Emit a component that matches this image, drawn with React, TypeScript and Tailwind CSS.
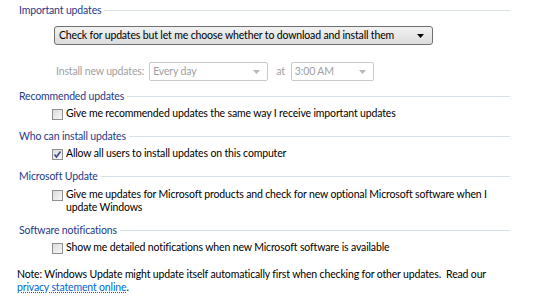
import React from 'react';

const font = { fontFamily: 'Lato, "Liberation Sans", Arial, sans-serif' };

function SectionHeader({ title }: { title: string }) {
  return (
    <div className="flex h-[16px] items-center">
      <span className="whitespace-nowrap leading-none text-[#1e3a8a]">{title}</span>
      <div className="ml-[3px] h-px flex-1 bg-[#d9e1e8]" />
    </div>
  );
}

function Checkbox({ checked }: { checked?: boolean }) {
  return (
    <span className="mt-[2px] flex h-[11px] w-[11px] shrink-0 items-center justify-center border border-[#8f8f8f] bg-gradient-to-br from-[#dcdcdc] to-[#f7f7f7]">
      {checked && (
        <svg width="9" height="9" viewBox="0 0 9 9">
          <path d="M1.5 4.5 L3.5 7 L7.5 1.5" fill="none" stroke="#3b4a8a" strokeWidth="1.6" />
        </svg>
      )}
    </span>
  );
}

function CheckRow({ checked, children }: { checked?: boolean; children: React.ReactNode }) {
  return (
    <div className="flex gap-[3px] pl-[33px]">
      <Checkbox checked={checked} />
      <span className="leading-[13px]">{children}</span>
    </div>
  );
}

function Arrow({ disabled }: { disabled?: boolean }) {
  return (
    <svg width="7" height="4" viewBox="0 0 7 4">
      <path d="M0 0 H7 L3.5 4 Z" fill={disabled ? '#b8b8b8' : '#000'} />
    </svg>
  );
}

export default function App() {
  return (
    <div
      className="h-[307px] w-[540px] overflow-hidden bg-white text-[10.5px] tracking-[-0.15px] text-black"
      style={font}
    >
      <div className="flex w-[510px] flex-col pl-[19px] pt-[2px]">
        <SectionHeader title="Important updates" />

        <div className="mt-[8px] ml-[35px] flex h-[19px] w-[379px] items-center justify-between rounded-[3px] border border-[#707070] bg-gradient-to-b from-[#f2f2f2] to-[#dcdcdc] pr-[8px] pl-[4px]">
          <span className="whitespace-nowrap">Check for updates but let me choose whether to download and install them</span>
          <Arrow />
        </div>

        <div className="mt-[17px] ml-[37px] flex items-center whitespace-nowrap text-[#a0a0a0]">
          <span>Install new updates:</span>
          <div className="ml-[5px] flex h-[19px] w-[119px] items-center justify-between rounded-[2px] border border-[#c9c9c9] pr-[7px] pl-[3px]">
            <span>Every day</span>
            <Arrow disabled />
          </div>
          <span className="ml-[8px]">at</span>
          <div className="ml-[6px] flex h-[19px] w-[83px] items-center justify-between rounded-[2px] border border-[#c9c9c9] pr-[7px] pl-[3px]">
            <span>3:00 AM</span>
            <Arrow disabled />
          </div>
        </div>

        <div className="mt-[7px]">
          <SectionHeader title="Recommended updates" />
        </div>
        <div className="mt-[3px]">
          <CheckRow>Give me recommended updates the same way I receive important updates</CheckRow>
        </div>

        <div className="mt-[8px]">
          <SectionHeader title="Who can install updates" />
        </div>
        <div className="mt-[3px]">
          <CheckRow checked>Allow all users to install updates on this computer</CheckRow>
        </div>

        <div className="mt-[8px]">
          <SectionHeader title="Microsoft Update" />
        </div>
        <div className="mt-[4px]">
          <CheckRow>
            <span className="whitespace-nowrap">
              Give me updates for Microsoft products and check for new optional Microsoft software when I
            </span>
            <br />
            update Windows
          </CheckRow>
        </div>

        <div className="mt-[8px]">
          <SectionHeader title="Software notifications" />
        </div>
        <div className="mt-[3px]">
          <CheckRow>Show me detailed notifications when new Microsoft software is available</CheckRow>
        </div>

        <div className="mt-[14px] -ml-[2px] whitespace-nowrap leading-[13px]">
          Note: Windows Update might update itself automatically first when checking for other updates.&nbsp; Read our
          <br />
          <a className="text-[#0066cc] underline decoration-dotted" href="#">privacy statement online</a>.
        </div>
      </div>
    </div>
  );
}
